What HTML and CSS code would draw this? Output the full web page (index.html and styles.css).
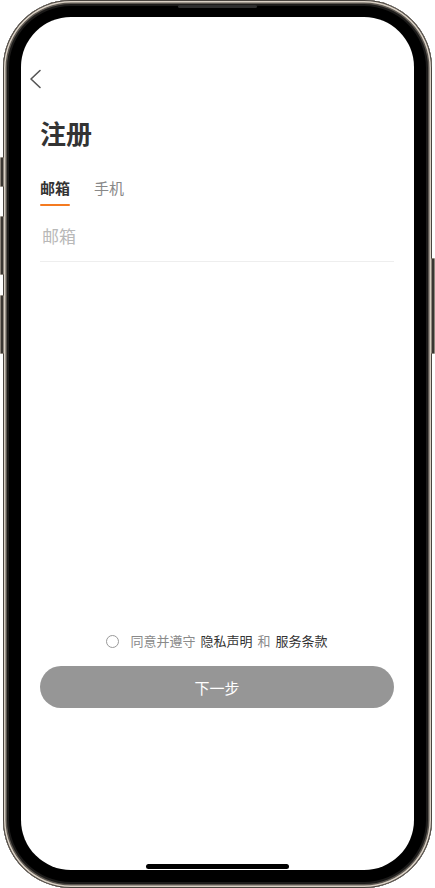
FILE: index.html
```html
<!DOCTYPE html>
<html lang="zh-CN">
<head>
<meta charset="utf-8">
<title>注册</title>
<link rel="stylesheet" href="styles.css">
</head>
<body>
<div class="device">
  <span class="btn-side btn-silent"></span>
  <span class="btn-side btn-vol-up"></span>
  <span class="btn-side btn-vol-down"></span>
  <span class="btn-side btn-power"></span>
  <span class="speaker"></span>
  <div class="phone">
    <div class="screen">
      <div class="nav">
        <svg class="back" width="13" height="20" viewBox="0 0 13 20" aria-hidden="true">
          <path d="M11 1.5 L2 10 L11 18.5" fill="none" stroke="#555" stroke-width="1.6" stroke-linecap="round" stroke-linejoin="round"/>
        </svg>
      </div>
      <h1 class="title">注册</h1>
      <div class="tabs">
        <div class="tab active">邮箱</div>
        <div class="tab">手机</div>
      </div>
      <div class="field">
        <span class="placeholder">邮箱</span>
      </div>
      <div class="spacer"></div>
      <div class="agree">
        <span class="radio"></span>
        <span class="muted">同意并遵守</span>
        <span class="link">隐私声明</span>
        <span class="muted">和</span>
        <span class="link">服务条款</span>
      </div>
      <button class="next">下一步</button>
      <div class="home-bar"></div>
    </div>
  </div>
</div>
</body>
</html>
```

FILE: styles.css
```css
* { box-sizing: border-box; }
html, body {
  margin: 0;
  padding: 0;
  background: #fff;
}
body {
  width: 435px;
  height: 888px;
  overflow: hidden;
  font-family: "Noto Sans CJK SC", "Noto Sans", sans-serif;
}
.device {
  position: relative;
  width: 435px;
  height: 888px;
  padding-left: 3px;
}
.phone {
  width: 429px;
  height: 888px;
  border-radius: 68px;
  background: #000;
  padding: 17px 18px 18px 18px;
  box-shadow:
    inset 0 0 0 1px #4a4540,
    inset 0 0 0 2.5px #d9d0c4,
    inset 0 0 0 4px #5b5650,
    inset 0 0 0 6px #1c1b1a;
}
.speaker {
  position: absolute;
  left: 178px;
  top: 5px;
  width: 79px;
  height: 3px;
  border-radius: 2px;
  background: #2e2e2e;
}
.btn-side {
  position: absolute;
  width: 4px;
  background: #3a3632;
  border: 1px solid #8d857b;
  border-radius: 1px;
}
.btn-silent { left: 0; top: 157px; height: 30px; }
.btn-vol-up { left: 0; top: 216px; height: 59px; }
.btn-vol-down { left: 0; top: 295px; height: 59px; }
.btn-power { right: 0; top: 258px; height: 96px; }

.screen {
  width: 393px;
  height: 853px;
  border-radius: 50px;
  background: #fff;
  overflow: hidden;
  display: flex;
  flex-direction: column;
  padding: 0 20px 0 19px;
}
.nav {
  height: 72px;
  padding-top: 52px;
  margin-left: -11px;
}
.back { display: block; }
.title {
  margin: 26px 0 0 0;
  font-size: 26px;
  line-height: 35px;
  font-weight: 700;
  color: #333;
}
.tabs {
  display: flex;
  gap: 24px;
  margin-top: 27px;
}
.tab {
  font-size: 15px;
  line-height: 22px;
  color: #888;
  padding-bottom: 5px;
  position: relative;
}
.tab.active {
  color: #333;
  font-weight: 700;
}
.tab.active::after {
  content: "";
  position: absolute;
  left: 0;
  right: 0;
  bottom: -2px;
  height: 2.5px;
  border-radius: 2px;
  background: #f47a20;
}
.field {
  margin-top: 19px;
  height: 39px;
  border-bottom: 1px solid #eeeeee;
  padding-left: 2px;
}
.placeholder {
  font-size: 17px;
  line-height: 26px;
  color: #b8b8b8;
}
.spacer { flex: 1; }
.agree {
  display: flex;
  align-items: center;
  justify-content: center;
  gap: 5px;
  font-size: 13px;
  line-height: 20px;
  margin-bottom: 15px;
}
.radio {
  width: 13px;
  height: 13px;
  border: 1px solid #999;
  border-radius: 50%;
  margin-right: 6px;
}
.muted { color: #8a8a8a; }
.link { color: #333; }
.next {
  height: 42px;
  border: none;
  border-radius: 21px;
  background: #969696;
  color: #fff;
  font-family: inherit;
  font-size: 15px;
  margin-bottom: 156px;
}
.home-bar {
  align-self: center;
  width: 143px;
  height: 5px;
  border-radius: 3px;
  background: #000;
  margin-bottom: 1px;
}
```
